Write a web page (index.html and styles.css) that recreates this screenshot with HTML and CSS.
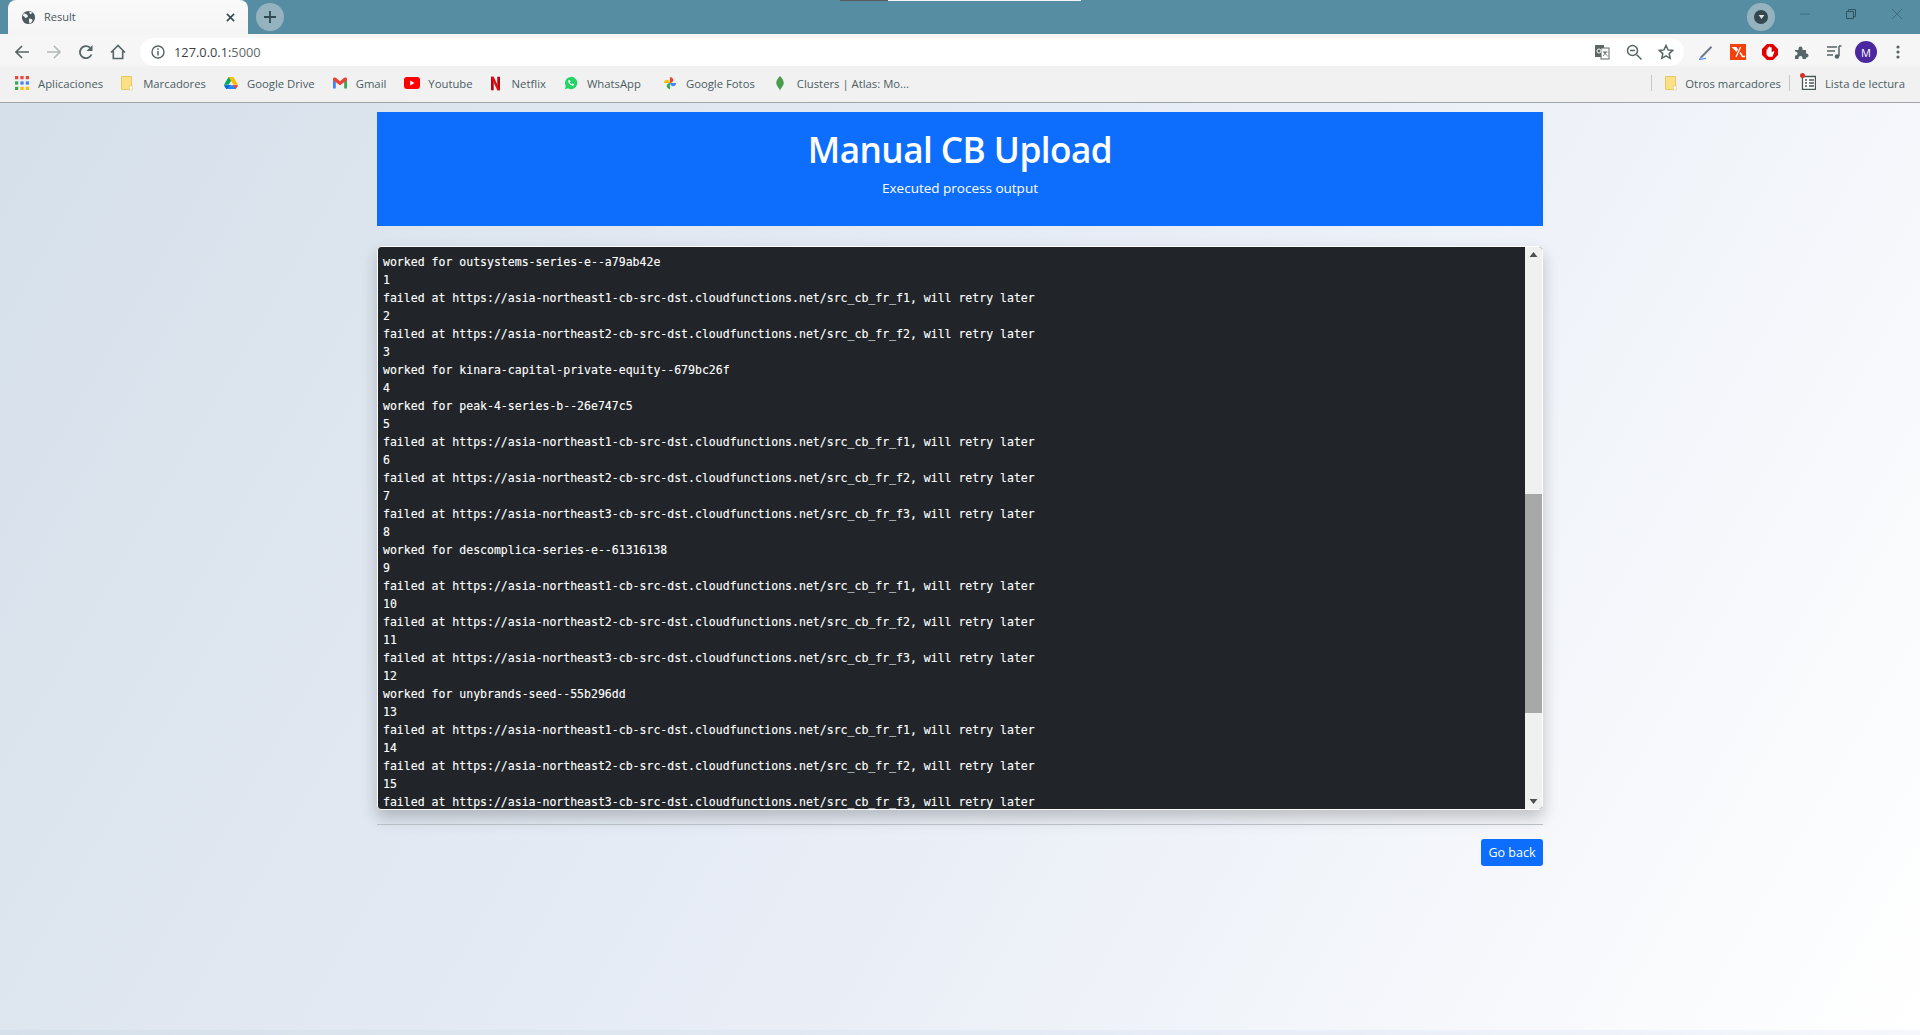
FILE: index.html
```html
<!DOCTYPE html>
<html lang="en">
<head>
<meta charset="utf-8">
<title>Result</title>
<link rel="stylesheet" href="styles.css">
</head>
<body>
<header class="chrome">
  <div class="sliver"><span class="sliver-dark"></span><span class="sliver-light"></span></div>
  <div class="tabstrip">
    <div class="tab">
      <svg class="fav" viewBox="0 0 16 16"><circle cx="8" cy="8" r="7" fill="#4c5b5f"/><path d="M3 3.500l3 1 1.500 2-1 1.500-2 .5-1-1.500-1.500-1zM8.500 9l3 .5 1 1.500-2 3-1.500.5-.5-2.500zM9 1.500l3 1.500-1.500 1.500-1.500-1z" fill="#f6f6f6"/></svg>
      <span class="tab-title">Result</span>
      <svg class="tab-close" viewBox="0 0 10 10"><path d="M1 1l8 8M9 1l-8 8" stroke="#33474d" stroke-width="1.700" fill="none"/></svg>
    </div>
    <div class="newtab"><svg viewBox="0 0 14 14"><path d="M7 1v12M1 7h12" stroke="#2f4a52" stroke-width="1.800" fill="none"/></svg></div>
    <div class="strip-space"></div>
    <div class="profile-pill"><span class="pill-inner"><svg viewBox="0 0 10 8"><path d="M1 1h8L5 7z" fill="#dfe7ea"/></svg></span></div>
    <div class="winctl">
      <svg viewBox="0 0 12 12"><path d="M1 6h10" stroke="#3f6d7e" fill="none"/></svg>
      <svg viewBox="0 0 12 12"><path d="M1.500 3.500h7v7h-7zM3.500 3.500v-2h7v7h-2" stroke="#2f5361" fill="none"/></svg>
      <svg viewBox="0 0 12 12"><path d="M1 1l10 10M11 1L1 11" stroke="#3f6d7e" fill="none"/></svg>
    </div>
  </div>
  <div class="toolbar">
    <div class="nav">
      <svg class="tool" viewBox="0 0 16 16"><path d="M15 8H2M8 2L2 8l6 6" stroke="#566566" stroke-width="1.700" fill="none"/></svg>
      <svg class="tool" viewBox="0 0 16 16"><path d="M1 8h13M8 2l6 6-6 6" stroke="#b4bab9" stroke-width="1.700" fill="none"/></svg>
      <svg class="tool" viewBox="0 0 16 16"><path d="M13.500 10.500A6 6 0 1 1 12 3.700" stroke="#566566" stroke-width="1.800" fill="none"/><path d="M14.500 1v6h-6z" fill="#566566"/></svg>
      <svg class="tool" viewBox="0 0 16 16"><path d="M1 8.500L8 1.500l7 7M3.300 7v7.500h9.400V7" stroke="#566566" stroke-width="1.600" fill="none"/></svg>
    </div>
    <div class="omnibox">
      <svg class="info" viewBox="0 0 14 14"><circle cx="7" cy="7" r="6" stroke="#566566" stroke-width="1.400" fill="none"/><path d="M7 6v4.500M7 3.300v1.500" stroke="#566566" stroke-width="1.500" fill="none"/></svg>
      <span class="url">127.0.0.1:<span class="url-port">5000</span></span>
      <div class="omni-right">
        <svg class="omni-icon" viewBox="0 0 16 16"><rect x="1" y="1" width="9" height="12" fill="#5f6764"/><rect x="7" y="4" width="8" height="11" fill="#fff" stroke="#5f6764"/><circle cx="5" cy="7" r="2" stroke="#fff" fill="none"/><path d="M9 8h4.500M11 8c0 2-1 3-2 4M11 8c.3 2 1.300 3 2.500 4" stroke="#5f6764" fill="none"/></svg>
        <svg class="omni-icon" viewBox="0 0 16 16"><circle cx="6.500" cy="6.500" r="5" stroke="#566566" stroke-width="1.500" fill="none"/><path d="M10.500 10.500l5 5M4 6.500h5" stroke="#566566" stroke-width="1.500" fill="none"/></svg>
        <svg class="omni-icon" viewBox="0 0 16 16"><path d="M8 1.500l2 4.400 4.800.5-3.600 3.200 1 4.700L8 11.900l-4.200 2.400 1-4.700L1.200 6.400 6 5.900z" stroke="#566566" stroke-width="1.500" fill="none"/></svg>
      </div>
    </div>
    <div class="extensions">
      <svg class="ext" viewBox="0 0 16 16"><path d="M2 13L12.800 2l1.400 1.400L4 14z" fill="#6f7a8f"/><path d="M1 15.300c3 0 5-.4 7-1" stroke="#3d7be0" stroke-width="1.200" fill="none"/><path d="M2 13l2 1-2.500 1z" fill="#4b8bf0"/></svg>
      <svg class="ext" viewBox="0 0 16 16"><rect width="16" height="16" fill="#f4410b"/><path d="M1.500 3h5l1.500 2.500L6.500 8z" fill="#fff"/><path d="M6 13l4.500-10" stroke="#fff" stroke-width="1.300"/><path d="M10 8.500l2.500 4h2.500" stroke="#fff" stroke-width="1.500" fill="none"/></svg>
      <svg class="ext" viewBox="0 0 16 16"><path d="M5 0h6l5 5v6l-5 5H5l-5-5V5z" fill="#e00000"/><path d="M4.500 8.500V5.500h1.200V8V3.500h1.300V7.500V2.800h1.400v4.700V3.500h1.300V8.500L11.500 7l.9.6L10.500 12.800H6.500L4.500 10.500z" fill="#fff"/></svg>
      <svg class="ext" viewBox="0 0 16 16"><path d="M1 6h3.500V4.500a2 2 0 0 1 4 0V6H12v3.500h.5a2 2 0 0 1 0 4H12V15H8.500v-1a2 2 0 0 0-4 0v1H1v-3.500h.5a2 2 0 0 0 0-4H1z" fill="#566566"/></svg>
      <svg class="ext" viewBox="0 0 16 16"><path d="M1 3h10M1 7h8M1 11h6" stroke="#566566" stroke-width="1.500" fill="none"/><path d="M13 2v10" stroke="#566566" stroke-width="1.500"/><path d="M13 2h2.500" stroke="#566566" stroke-width="1.500"/><circle cx="11" cy="12.500" r="2.300" fill="#566566"/></svg>
      <span class="avatar">M</span>
      <svg class="ext dots" viewBox="0 0 4 16"><circle cx="2" cy="3" r="1.600" fill="#566566"/><circle cx="2" cy="8" r="1.600" fill="#566566"/><circle cx="2" cy="13" r="1.600" fill="#566566"/></svg>
    </div>
  </div>
  <nav class="bookmarks">
    <a class="bm">
      <svg class="bm-icon" viewBox="0 0 13 13"><rect x="0" y="0" width="3" height="3" fill="#e8453c"/><rect x="5" y="0" width="3" height="3" fill="#e8453c"/><rect x="10" y="0" width="3" height="3" fill="#e8453c"/><rect x="0" y="5" width="3" height="3" fill="#34a853"/><rect x="5" y="5" width="3" height="3" fill="#4285f4"/><rect x="10" y="5" width="3" height="3" fill="#4285f4"/><rect x="0" y="10" width="3" height="3" fill="#34a853"/><rect x="5" y="10" width="3" height="3" fill="#fbbc05"/><rect x="10" y="10" width="3" height="3" fill="#fbbc05"/></svg>Aplicaciones</a>
    <a class="bm">
      <svg class="bm-icon folder" viewBox="0 0 12 15"><path d="M.5.500h10v13h-10z" fill="#fbe084" stroke="#e5c968"/><rect x="8.500" y="10" width="3" height="4" fill="#fff" stroke="#e5c968" stroke-width=".6"/></svg>Marcadores</a>
    <a class="bm">
      <svg class="bm-icon" viewBox="0 0 15 13"><path d="M5 0h5L5 8.500H0z" fill="#00a85d"/><path d="M5 0h5l5 8.500h-5z" fill="#fbbc04"/><path d="M0 9l2.500 4h10L15 9z" fill="#2684fc"/><path d="M0 9l2.500 4L7.500 9z" fill="#0066da"/><path d="M15 9l-2.500 4-3-4z" fill="#ea4335"/></svg>Google Drive</a>
    <a class="bm">
      <svg class="bm-icon" viewBox="0 0 15 12"><path d="M0 2v10h3V5z" fill="#4285f4"/><path d="M15 2v10h-3V5z" fill="#34a853"/><path d="M0 1.500C0 0 2 -.5 3 .5L7.500 4 12 .5c1-1 3-.5 3 1V3L7.500 8.500 0 3z" fill="#ea4335"/></svg>Gmail</a>
    <a class="bm">
      <svg class="bm-icon wide" viewBox="0 0 16 12"><rect width="16" height="12" rx="3" fill="#f00"/><path d="M6.200 3.500v5L10.500 6z" fill="#fff"/></svg>Youtube</a>
    <a class="bm">
      <svg class="bm-icon netflix" viewBox="0 0 10 15"><path d="M0 0h3v15H0zM7 0h3v15H7z" fill="#b1060f"/><path d="M0 0h3l7 15H7z" fill="#e50914"/></svg>Netflix</a>
    <a class="bm">
      <svg class="bm-icon" viewBox="0 0 16 16"><path d="M8 1a7 7 0 0 0-6 10.500L1 15l3.600-1A7 7 0 1 0 8 1z" fill="#25d366"/><path d="M5.500 4.500c-1 .8-.8 2.500.5 4s3 2.700 4.200 2.600c1-.1 1.600-1 1.300-1.600l-1.500-.8-.8.800c-1-.3-2.200-1.500-2.500-2.500l.7-.8-.7-1.700z" fill="#fff"/></svg>WhatsApp</a>
    <a class="bm bm-fotos">
      <svg class="bm-icon" viewBox="0 0 16 16"><path d="M8 8V1c2.200 0 3.800 1.800 3.800 3.500S10 8 8 8z" fill="#ea4335"/><path d="M8 8h7c0 2.200-1.800 3.800-3.500 3.800S8 10 8 8z" fill="#4285f4"/><path d="M8 8v7c-2.200 0-3.800-1.800-3.800-3.500S6 8 8 8z" fill="#34a853"/><path d="M8 8H1c0-2.200 1.800-3.800 3.500-3.800S8 6 8 8z" fill="#fbbc04"/></svg>Google Fotos</a>
    <a class="bm bm-clusters">
      <svg class="bm-icon leaf" viewBox="0 0 8 16"><path d="M4 0c2.500 2.500 4 5 4 7.500S5.500 13 4.500 14L4 16l-.5-2C2.500 13 0 10 0 7.500S1.500 2.500 4 0z" fill="#499d4a"/></svg>Clusters | Atlas: Mo...</a>
    <span class="bm-space"></span>
    <span class="bm-sep"></span>
    <a class="bm">
      <svg class="bm-icon folder folder-right" viewBox="0 0 12 15"><path d="M.5.500h10v13h-10z" fill="#fbe084" stroke="#e5c968"/><rect x="8.500" y="10" width="3" height="4" fill="#fff" stroke="#e5c968" stroke-width=".6"/></svg>Otros marcadores</a>
    <span class="bm-sep bm-sep-tight"></span>
    <a class="bm">
      <svg class="bm-icon reading" viewBox="0 0 16 17"><path d="M2.500 3.500h13v13h-13z" fill="#fff" stroke="#4a5757" stroke-width="1.300"/><path d="M5 7h2M9 7h5M5 10h2M9 10h5M5 13h2M9 13h5" stroke="#4a5757" stroke-width="1.400"/><circle cx="2.500" cy="2.500" r="2.500" fill="#d93025"/></svg>Lista de lectura</a>
  </nav>
</header>
<main class="page">
  <div class="container">
    <section class="jumbo">
      <h1 class="jumbo-title">Manual CB Upload</h1>
      <p class="jumbo-sub">Executed process output</p>
    </section>
    <section class="output">
      <pre class="log">worked for outsystems-series-e--a79ab42e
1
failed at https://asia-northeast1-cb-src-dst.cloudfunctions.net/src_cb_fr_f1, will retry later
2
failed at https://asia-northeast2-cb-src-dst.cloudfunctions.net/src_cb_fr_f2, will retry later
3
worked for kinara-capital-private-equity--679bc26f
4
worked for peak-4-series-b--26e747c5
5
failed at https://asia-northeast1-cb-src-dst.cloudfunctions.net/src_cb_fr_f1, will retry later
6
failed at https://asia-northeast2-cb-src-dst.cloudfunctions.net/src_cb_fr_f2, will retry later
7
failed at https://asia-northeast3-cb-src-dst.cloudfunctions.net/src_cb_fr_f3, will retry later
8
worked for descomplica-series-e--61316138
9
failed at https://asia-northeast1-cb-src-dst.cloudfunctions.net/src_cb_fr_f1, will retry later
10
failed at https://asia-northeast2-cb-src-dst.cloudfunctions.net/src_cb_fr_f2, will retry later
11
failed at https://asia-northeast3-cb-src-dst.cloudfunctions.net/src_cb_fr_f3, will retry later
12
worked for unybrands-seed--55b296dd
13
failed at https://asia-northeast1-cb-src-dst.cloudfunctions.net/src_cb_fr_f1, will retry later
14
failed at https://asia-northeast2-cb-src-dst.cloudfunctions.net/src_cb_fr_f2, will retry later
15
failed at https://asia-northeast3-cb-src-dst.cloudfunctions.net/src_cb_fr_f3, will retry later</pre>
      <div class="scrollbar">
        <svg class="sb-arrow" viewBox="0 0 17 17"><path d="M8.500 5l4 5h-8z" fill="#505050"/></svg>
        <div class="sb-before"></div>
        <div class="sb-thumb"></div>
        <div class="sb-after"></div>
        <svg class="sb-arrow" viewBox="0 0 17 17"><path d="M8.500 12l4-5h-8z" fill="#505050"/></svg>
      </div>
    </section>
    <hr class="rule">
    <div class="actions"><a class="btn">Go back</a></div>
  </div>
</main>
</body>
</html>
```

FILE: styles.css
```css
* { box-sizing: border-box; }
html, body { margin: 0; height: 100%; }
body {
  display: flex;
  flex-direction: column;
  height: 1035px;
  overflow: hidden;
  font-family: "Open Sans", "Liberation Sans", sans-serif;
  color: #212529;
}
svg { display: block; flex: none; }

.chrome { flex: none; position: relative; }
.sliver { position: absolute; top: 0; left: 840px; display: flex; height: 1px; }
.sliver-dark { width: 48px; background: #565a5c; }
.sliver-light { width: 193px; background: #f4f6f7; }

.tabstrip { height: 34px; background: #568da3; display: flex; align-items: flex-start; }
.tab {
  width: 240px; height: 34px; margin-left: 8px;
  background: linear-gradient(#fafafa, #f5f5f5);
  border-radius: 8px 8px 0 0;
  display: flex; align-items: center;
  padding: 0 13px 0 13px;
}
.fav { width: 15px; height: 15px; }
.tab-title { margin: -2px 0 0 8px; font-size: 11px; color: #4a5659; flex: 1; }
.tab-close { width: 9px; height: 9px; }
.newtab {
  width: 28px; height: 28px; margin: 3px 0 0 8px;
  border-radius: 50%; background: #94b3bf;
  display: flex; align-items: center; justify-content: center;
}
.newtab svg { width: 14px; height: 14px; }
.strip-space { flex: 1; }
.profile-pill {
  width: 28px; height: 28px; margin-top: 3px;
  border-radius: 50%; background: #94b3bf;
  display: flex; align-items: center; justify-content: center;
}
.pill-inner {
  width: 14px; height: 14px; border-radius: 50%; background: #33474d;
  display: flex; align-items: center; justify-content: center;
}
.pill-inner svg { width: 7px; height: 6px; }
.winctl { display: flex; gap: 34px; padding: 8px 17px 0 24px; }
.winctl svg { width: 12px; height: 12px; }

.toolbar { height: 32px; background: #f6f6f6; display: flex; align-items: flex-end; }
.nav { width: 140px; height: 32px; display: flex; align-items: center; gap: 16px; padding: 4px 0 0 14px; }
.tool { width: 16px; height: 16px; }
.omnibox {
  width: 1544px; height: 28px; background: #fff;
  border-radius: 14px;
  display: flex; align-items: center;
  padding: 0 10px 0 11px;
}
.info { width: 14px; height: 14px; }
.url { margin-left: 9px; font-size: 12.8px; color: #3a3f4a; }
.url-port { color: #5e6868; }
.omni-right { margin-left: auto; display: flex; gap: 16px; }
.omni-icon { width: 16px; height: 16px; }
.extensions { flex: 1; height: 32px; display: flex; align-items: center; gap: 16px; padding: 4px 0 0 14px; }
.ext { width: 16px; height: 16px; }
.avatar {
  width: 22px; height: 22px; margin-left: -3px; margin-right: -3px;
  border-radius: 50%; background: #4a28a0; color: #fff;
  font-size: 11px; display: flex; align-items: center; justify-content: center;
}
.ext.dots { width: 4px; margin-left: 6px; }

.bookmarks {
  height: 37px;
  background: #f1f1f1;
  border-bottom: 1px solid #a4a4a4;
  display: flex; align-items: center; gap: 18px;
  padding: 0 15px 2px;
}
.bm { display: flex; align-items: center; gap: 9px; font-size: 11.3px; color: #4a5d64; white-space: nowrap; }
.bm-fotos { margin-left: 4px; }
.bm-clusters { margin-left: 3px; }
.bm-icon { width: 14px; height: 14px; }
.bm-icon.wide { width: 16px; margin-right: -1px; }
.bm-icon.netflix { width: 9px; height: 15px; margin-right: 3px; }
.bm-icon.folder { width: 12px; height: 15px; margin-right: 1px; }
.bm-icon.folder-right { margin-right: -1px; }
.bm-icon.leaf { width: 8px; height: 15px; margin: 0 4px 0 0; }
.bm-icon.reading { width: 16px; height: 17px; margin-top: -3px; }
.bm-space { flex: 1; }
.bm-sep { width: 1px; height: 16px; background: #c6c6c6; margin: 0 -5px 0 -6px; }
.bm-sep-tight { margin: 0 -8px 0 -10px; }

.page {
  flex: 1;
  background-image: linear-gradient(120deg, #d6e0ea 0%, #e8edf6 52%, #ffffff 100%);
  background-size: 100% 927px;
  background-repeat: repeat-y;
  padding-top: 9px;
}
.container { width: 1166px; margin: 0 auto; }
.jumbo {
  height: 114px; background: #0d6efd; color: #fff;
  text-align: center; padding-top: 13px;
}
.jumbo-title { margin: 0; font-size: 35.2px; line-height: 48px; font-weight: 600; letter-spacing: -.55px; }
.jumbo-sub { margin: 5px 0 0; font-size: 13.5px; line-height: 20px; }
.output {
  margin-top: 20px; height: 564px;
  display: flex;
  background: #212529;
  border: 1px solid #fff;
  border-radius: 4px;
  box-shadow: 0 8px 16px rgba(0, 0, 0, .22);
  overflow: hidden;
}
.log {
  flex: 1; margin: 0; padding: 6px 5px 0;
  overflow: hidden;
  font-family: "DejaVu Sans Mono", "Liberation Mono", monospace;
  font-size: 11.53px; line-height: 18px;
  color: #fff;
  -webkit-text-stroke: .12px #fff;
}
.scrollbar { width: 17px; flex: none; background: #f0f0f0; display: flex; flex-direction: column; }
.sb-arrow { width: 17px; height: 17px; }
.sb-before { height: 230px; }
.sb-thumb { height: 219px; background: #a8a8a8; }
.sb-after { flex: 1; }
.rule { margin: 14px 0 0; border: 0; border-top: 1px solid #b9bec4; }
.actions { display: flex; justify-content: flex-end; margin-top: 14px; }
.btn {
  width: 62px; height: 27px;
  background: #0d6efd; color: #fff; border-radius: 3px;
  font-size: 12.5px;
  display: flex; align-items: center; justify-content: center;
}
```
